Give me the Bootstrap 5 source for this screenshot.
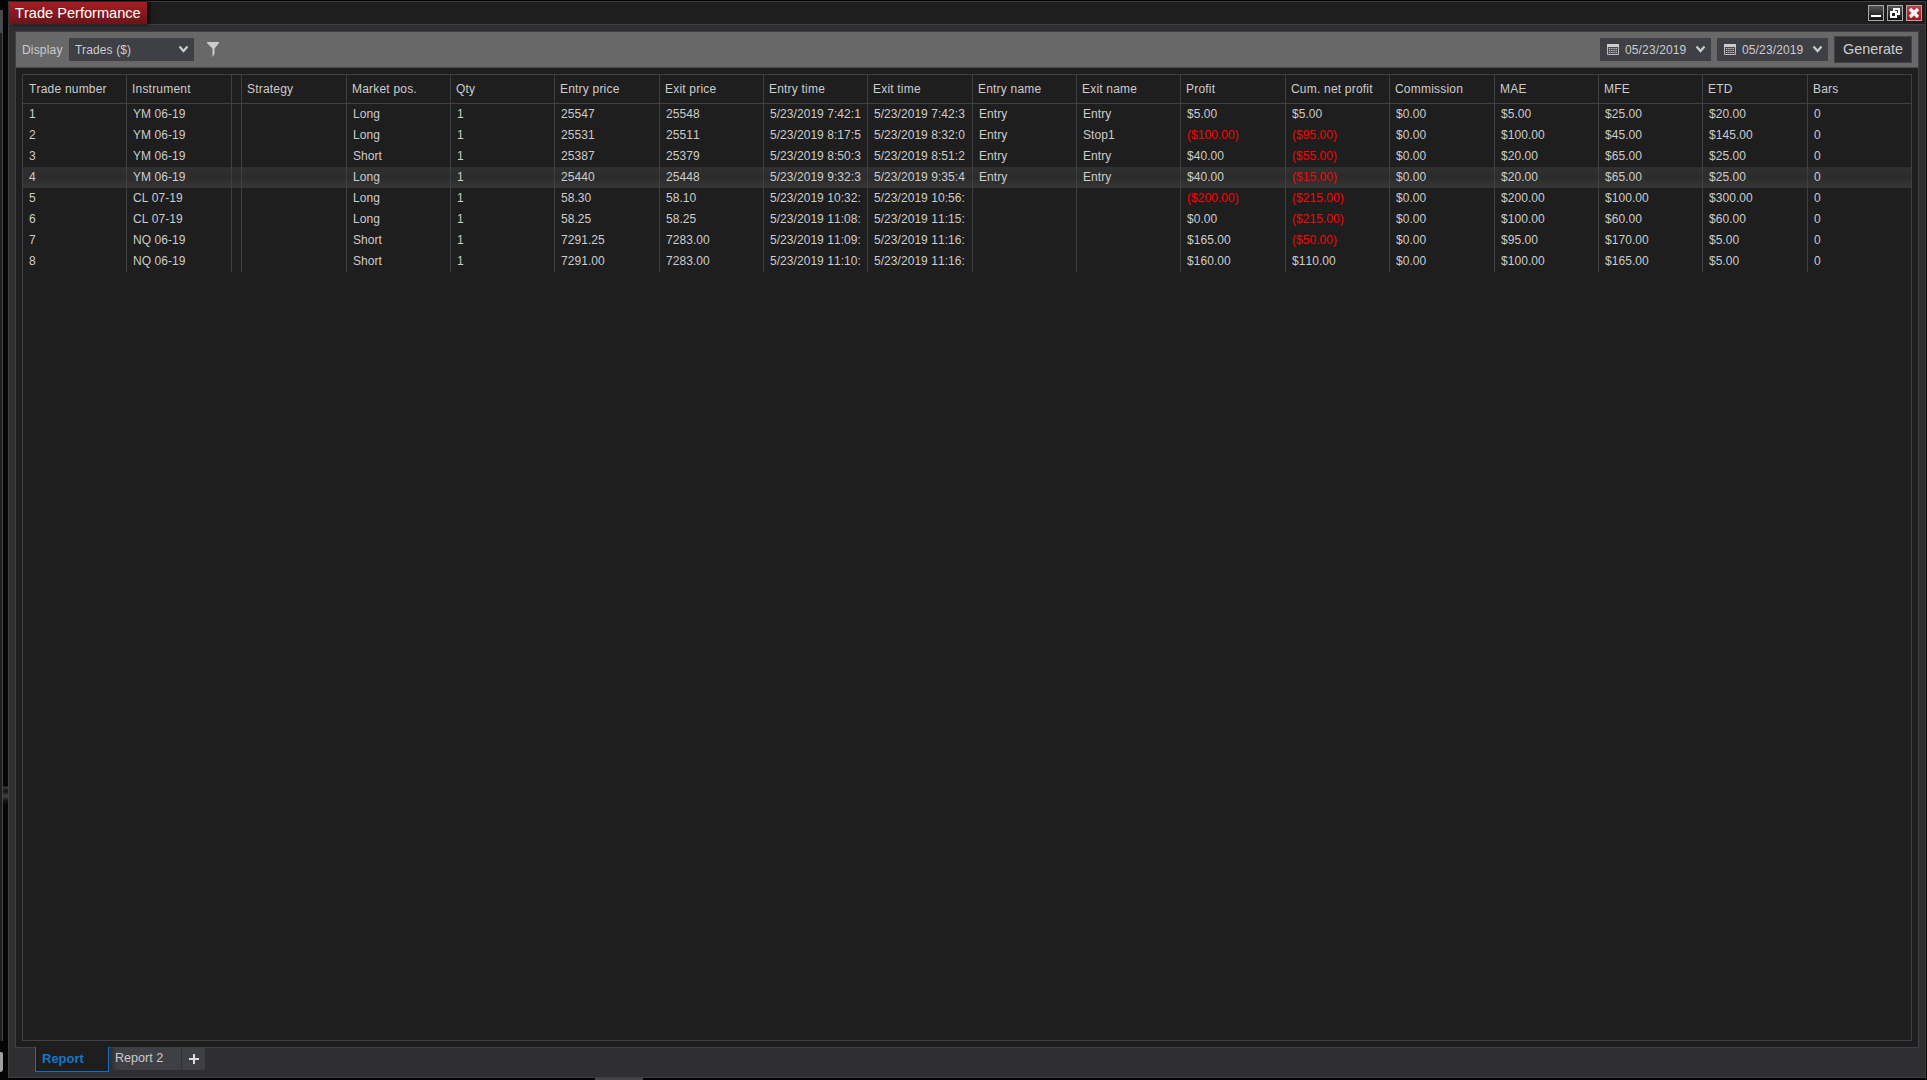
<!DOCTYPE html>
<html lang="en" data-bs-theme="dark">
<head>
<meta charset="utf-8">
<title>Trade Performance</title>
<link href="https://cdn.jsdelivr.net/npm/bootstrap@5.3.0/dist/css/bootstrap.min.css" rel="stylesheet">
<style>
body{width:1927px;height:1080px;background:#050506;font-family:"Liberation Sans",Arial,sans-serif;font-size:12px;font-kerning:none;line-height:1;color:#ccc;overflow:hidden}
.edge{width:8px;flex:none;padding:10px 0 0;background:linear-gradient(transparent 786px,#3a3a3a 787px,#111 791px,#444 796px,#111 801px,transparent 806px)}
.edge-win{width:3px;height:1031px;background:linear-gradient(#4a4a4c 0 23px,#1e1e1f 23px);border-right:1px solid #464648}
.edge-glyph{width:3px;height:20px;margin-top:11px;background:#a0a0a0;border-radius:0 3px 5px 0}
.win{width:1918px;height:1077px;margin-top:1px;border:1px solid #3e3e42;background:#2f2f32;flex:none}
.titlebar{height:23px;background:#1e1e1e;border-bottom:1px solid #3f3f46}
.caption{width:138px;height:22px;padding-left:6px;background:linear-gradient(#a81c22,#66161a);color:#fff;font-size:14.6px;line-height:22px;white-space:nowrap;box-shadow:2px 0 4px #000}
.winbtns{padding:3px 3px 0 0;gap:3px}
.winbtns svg{display:block}
.panel{height:1017px;margin:6px 6px 0;border:1px solid #3f3f46;background:#1e1e1e}
.tools{height:36px;background:#686868;border-bottom:1px solid #4a4a4e;padding:0 6px}
.lbl{letter-spacing:.18px;width:47px;color:#ccc}
.pick{height:23px;background:#3f3f46;border-radius:0;letter-spacing:.13px;color:#ccc;font-size:12px}
.pick-a{width:125px;padding:0 5px 0 6px}
.pick-d{width:111px;padding:0 5px 0 7px;margin-right:6px}
.funnel{margin-left:13px}
.gen{width:78px;height:27px;background:#2d2d30;border:1px solid #434346;border-radius:0;color:#ccc;font-size:14.4px;padding:0;line-height:1}
.sheet{margin:6px;height:967px;border:1px solid #3f3f46}
.trades{--bs-table-bg:transparent;table-layout:fixed;border-collapse:separate;border-spacing:0;width:1888px;margin:0;color:#ccc}
.trades>:not(caption)>*>*{padding:0 5px 0 6px;border:0;border-right:1px solid #3f3f46;height:21px;line-height:21px;box-shadow:none;color:#ccc;white-space:nowrap;vertical-align:top}
.trades>:not(caption)>*>:last-child{border-right:0}
.trades>thead>tr>th{height:28px!important;line-height:28px!important;padding-right:0;border-bottom:1px solid #3f3f46!important;font-weight:400;letter-spacing:.2px}
.trades>thead>tr>th+th{padding-left:5px}
.trades>tbody>tr>td{letter-spacing:.05px}
.trades>tbody>tr>td.neg{color:#f00}
.trades tr.sel{background:linear-gradient(#303030,#2b2b2b 50%,#363636)}
.tabs-b{height:24px;padding-left:26px}
.tab-on{width:74px;height:25px;margin-top:-1px;border:1px solid #0e70c0;border-top:0;background:#1e1e1e;color:#1177cc;font-size:13px;font-weight:700;padding:5px 0 0 6px}
.tab-x{height:22px;background:linear-gradient(90deg,#29292c,#3f3f46 8px);color:#ccc;font-size:12.6px;width:73px;padding:4px 0 0 6px;border-right:1px solid #2f2f32}
.tab-p{width:23px;height:22px;background:#3f3f46}
.strip{width:48px;height:2px;margin-left:587px;background:#444446}
</style>
<script src="https://cdn.jsdelivr.net/npm/bootstrap@5.3.0/dist/js/bootstrap.bundle.min.js"></script>
</head>
<body class="d-flex">
<div class="edge"><div class="edge-win"></div><div class="edge-glyph"></div></div>
<div class="d-flex flex-column">
<main class="win">
  <header class="titlebar d-flex justify-content-between">
    <div class="caption">Trade Performance</div>
    <div class="winbtns d-flex">
      <svg width="16" height="16" viewBox="0 0 16 16"><defs><linearGradient id="k" x2="0" y2="1"><stop stop-color="#555"/><stop offset="1" stop-color="#111"/></linearGradient><linearGradient id="r" x2="0" y2="1"><stop stop-color="#b8484c"/><stop offset="1" stop-color="#a0141a"/></linearGradient></defs><rect x=".5" y=".5" width="15" height="15" fill="url(#k)" stroke="#a9a9a9"/><path d="M3 10h10v2H3z" fill="#fff"/></svg>
      <svg width="16" height="16" viewBox="0 0 16 16"><rect x=".5" y=".5" width="15" height="15" fill="url(#k)" stroke="#a9a9a9"/><path d="M7 7V4h5v5H9" fill="none" stroke="#fff" stroke-width="2"/><path d="M4 7h5v5H4z" fill="#222" stroke="#fff" stroke-width="2"/></svg>
      <svg width="16" height="16" viewBox="0 0 16 16"><rect x=".5" y=".5" width="15" height="15" fill="url(#r)" stroke="#b9a0a0"/><path d="M4 4l8 8m0-8l-8 8" stroke="#fff" stroke-width="3.2"/></svg>
    </div>
  </header>
  <section class="panel">
    <div class="tools d-flex align-items-center">
      <span class="lbl">Display</span>
      <button class="btn pick pick-a d-flex align-items-center justify-content-between border-0">Trades ($)<svg width="11" height="9" viewBox="0 0 11 9"><path d="M1.5 1.5l4 4.5 4-4.5" fill="none" stroke="#ccc" stroke-width="2.2"/></svg></button>
      <svg class="funnel flex-shrink-0" width="12" height="16" viewBox="0 0 12 16"><path d="M0 0h12v1L7.5 6.5V12L5.5 15V6.5L0 1z" fill="#ccc"/></svg>
      <button class="btn pick pick-d d-flex align-items-center border-0 ms-auto"><svg class="me-1" width="14" height="13" viewBox="0 0 14 13"><path d="M.5 1.5h11v10H.5z" fill="#4a4a50" stroke="#bbb"/><path d="M0 1h12v3H0z" fill="#ccc"/><path d="M2 5.5h8M2 7.5h8M2 9.5h8" stroke="#ccc" stroke-dasharray="1.3 .9"/></svg>05/23/2019<svg class="ms-auto" width="11" height="9" viewBox="0 0 11 9"><path d="M1.5 1.5l4 4.5 4-4.5" fill="none" stroke="#ccc" stroke-width="2.2"/></svg></button>
      <button class="btn pick pick-d d-flex align-items-center border-0"><svg class="me-1" width="14" height="13" viewBox="0 0 14 13"><path d="M.5 1.5h11v10H.5z" fill="#4a4a50" stroke="#bbb"/><path d="M0 1h12v3H0z" fill="#ccc"/><path d="M2 5.5h8M2 7.5h8M2 9.5h8" stroke="#ccc" stroke-dasharray="1.3 .9"/></svg>05/23/2019<svg class="ms-auto" width="11" height="9" viewBox="0 0 11 9"><path d="M1.5 1.5l4 4.5 4-4.5" fill="none" stroke="#ccc" stroke-width="2.2"/></svg></button>
      <button class="btn gen">Generate</button>
    </div>
    <div class="sheet">
      <table class="table trades">
        <colgroup><col style="width:104px"><col style="width:105px"><col style="width:10px"><col style="width:105px"><col style="width:104px"><col style="width:104px"><col style="width:105px"><col style="width:104px"><col style="width:104px"><col style="width:105px"><col style="width:104px"><col style="width:104px"><col style="width:105px"><col style="width:104px"><col style="width:105px"><col style="width:104px"><col style="width:104px"><col style="width:105px"><col style="width:103px"></colgroup>
        <thead><tr><th>Trade number</th><th>Instrument</th><th class="p-0"></th><th>Strategy</th><th>Market pos.</th><th>Qty</th><th>Entry price</th><th>Exit price</th><th>Entry time</th><th>Exit time</th><th>Entry name</th><th>Exit name</th><th>Profit</th><th>Cum. net profit</th><th>Commission</th><th>MAE</th><th>MFE</th><th>ETD</th><th>Bars</th></tr></thead>
        <tbody id="rows"></tbody>
      </table>
    </div>
  </section>
  <nav class="tabs-b d-flex">
    <div class="tab-on">Report</div><div class="tab-x">Report 2</div>
    <div class="tab-p d-flex align-items-center justify-content-center"><svg width="10" height="10" viewBox="0 0 10 10"><path d="M5 0v10M0 5h10" stroke="#ddd" stroke-width="2"/></svg></div>
  </nav>
</main>
<div class="strip"></div>
</div>
<script>
const trades=[
"1|YM 06-19|||Long|1|25547|25548|5/23/2019 7:42:1|5/23/2019 7:42:3|Entry|Entry|$5.00|$5.00|$0.00|$5.00|$25.00|$20.00|0",
"2|YM 06-19|||Long|1|25531|25511|5/23/2019 8:17:5|5/23/2019 8:32:0|Entry|Stop1|($100.00)|($95.00)|$0.00|$100.00|$45.00|$145.00|0",
"3|YM 06-19|||Short|1|25387|25379|5/23/2019 8:50:3|5/23/2019 8:51:2|Entry|Entry|$40.00|($55.00)|$0.00|$20.00|$65.00|$25.00|0",
"4|YM 06-19|||Long|1|25440|25448|5/23/2019 9:32:3|5/23/2019 9:35:4|Entry|Entry|$40.00|($15.00)|$0.00|$20.00|$65.00|$25.00|0",
"5|CL 07-19|||Long|1|58.30|58.10|5/23/2019 10:32:|5/23/2019 10:56:|||($200.00)|($215.00)|$0.00|$200.00|$100.00|$300.00|0",
"6|CL 07-19|||Long|1|58.25|58.25|5/23/2019 11:08:|5/23/2019 11:15:|||$0.00|($215.00)|$0.00|$100.00|$60.00|$60.00|0",
"7|NQ 06-19|||Short|1|7291.25|7283.00|5/23/2019 11:09:|5/23/2019 11:16:|||$165.00|($50.00)|$0.00|$95.00|$170.00|$5.00|0",
"8|NQ 06-19|||Short|1|7291.00|7283.00|5/23/2019 11:10:|5/23/2019 11:16:|||$160.00|$110.00|$0.00|$100.00|$165.00|$5.00|0"];
document.getElementById("rows").innerHTML=trades.map((t,i)=>`<tr${i===3?' class="sel"':''}>`+t.split("|").map((c,j)=>`<td class="${c[0]==='('?'neg':''}${j===2?'p-0':''}">${c}</td>`).join("")+"</tr>").join("");
</script>
</body>
</html>
